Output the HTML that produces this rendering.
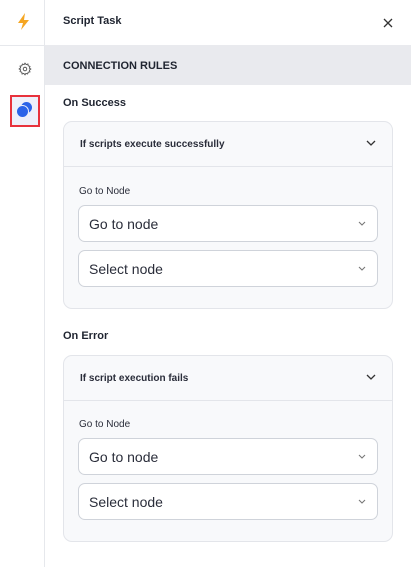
<!DOCTYPE html>
<html><head><style>
*{box-sizing:border-box;margin:0;padding:0}
body{width:411px;height:567px;background:#fff;font-family:"Liberation Sans",sans-serif;color:#1f2430;position:relative;overflow:hidden}
.side{position:absolute;left:0;top:0;width:45px;height:567px;border-right:1px solid #e6e8ec}
.abs{position:absolute}
.card{position:absolute;left:63px;width:330px;border:1px solid #e3e5ea;border-radius:9px;background:#f8f9fb}
.ch{height:45px;border-bottom:1px solid #e3e5ea;font-size:10px;font-weight:bold;color:#2a2d3a;padding:17px 0 0 16px;position:relative}
.lbl{position:absolute;left:15px;font-size:10px;color:#2a2d3a}
.sel{position:absolute;left:14px;width:300px;height:37px;background:#fff;border:1px solid #cfd3da;border-radius:7px;font-size:14px;color:#2a2d3a;padding:10px 0 0 10px}
.chev{position:absolute}
</style></head><body>
<div class="side">
<svg class="abs" style="left:17px;top:13px" width="14" height="17" viewBox="0 0 14 17"><path d="M8 0L1 10h5l-2 7 8-10H7z" fill="#f5a623"/></svg>
<div class="abs" style="left:0;top:45px;width:44px;border-top:1px solid #e6e8ec"></div>
<svg class="abs" style="left:18px;top:62px" width="14" height="14" viewBox="0 0 24 24" fill="none" stroke="#555" stroke-width="1.6"><circle cx="12" cy="12" r="3"/><path d="M12 2l2 2.5 3-1 .5 3 3 1-1 3L22 12l-2.5 2 1 3-3 .5-1 3-3-1L12 22l-2-2.5-3 1-.5-3-3-1 1-3L2 12l2.5-2-1-3 3-.5 1-3 3 1z"/></svg>
<div class="abs" style="left:10px;top:95px;width:30px;height:32px;border:2px solid #e8323c;background:#eef0fa"></div>
<div class="abs" style="left:21px;top:102px;width:11px;height:11px;border-radius:50%;background:#2b63e8"></div>
<div class="abs" style="left:16px;top:105px;width:13px;height:13px;border-radius:50%;background:#2b63e8;border:1px solid #eef0fa"></div>
</div>
<div class="abs" style="left:63px;top:15px;font-size:11px;font-weight:bold">Script Task</div>
<svg class="abs" style="left:383px;top:18px" width="10" height="10" viewBox="0 0 10 10" stroke="#333" stroke-width="1.3"><path d="M1 1l8 8M9 1l-8 8"/></svg>
<div class="abs" style="left:45px;top:45px;width:366px;height:40px;background:#e9eaee;font-size:11px;font-weight:bold;padding:15px 0 0 18px">CONNECTION RULES</div>
<div class="abs" style="left:63px;top:97px;font-size:11px;font-weight:bold">On Success</div>
<div class="card" style="top:121px;height:188px">
<div class="ch">If scripts execute successfully<svg class="chev" style="right:16px;top:18px" width="10" height="6" viewBox="0 0 10 6" fill="none" stroke="#333" stroke-width="1.3"><path d="M1 1l4 4 4-4"/></svg></div>
<div class="lbl" style="top:64px">Go to Node</div>
<div class="sel" style="top:83px">Go to node<svg class="chev" style="right:11px;top:15px" width="8" height="5" viewBox="0 0 8 5" fill="none" stroke="#777" stroke-width="1.1"><path d="M1 1l3 3 3-3"/></svg></div>
<div class="sel" style="top:128px">Select node<svg class="chev" style="right:11px;top:15px" width="8" height="5" viewBox="0 0 8 5" fill="none" stroke="#777" stroke-width="1.1"><path d="M1 1l3 3 3-3"/></svg></div>
</div>
<div class="abs" style="left:63px;top:330px;font-size:11px;font-weight:bold">On Error</div>
<div class="card" style="top:355px;height:187px">
<div class="ch">If script execution fails<svg class="chev" style="right:16px;top:18px" width="10" height="6" viewBox="0 0 10 6" fill="none" stroke="#333" stroke-width="1.3"><path d="M1 1l4 4 4-4"/></svg></div>
<div class="lbl" style="top:63px">Go to Node</div>
<div class="sel" style="top:82px">Go to node<svg class="chev" style="right:11px;top:15px" width="8" height="5" viewBox="0 0 8 5" fill="none" stroke="#777" stroke-width="1.1"><path d="M1 1l3 3 3-3"/></svg></div>
<div class="sel" style="top:127px">Select node<svg class="chev" style="right:11px;top:15px" width="8" height="5" viewBox="0 0 8 5" fill="none" stroke="#777" stroke-width="1.1"><path d="M1 1l3 3 3-3"/></svg></div>
</div>
</body></html>
